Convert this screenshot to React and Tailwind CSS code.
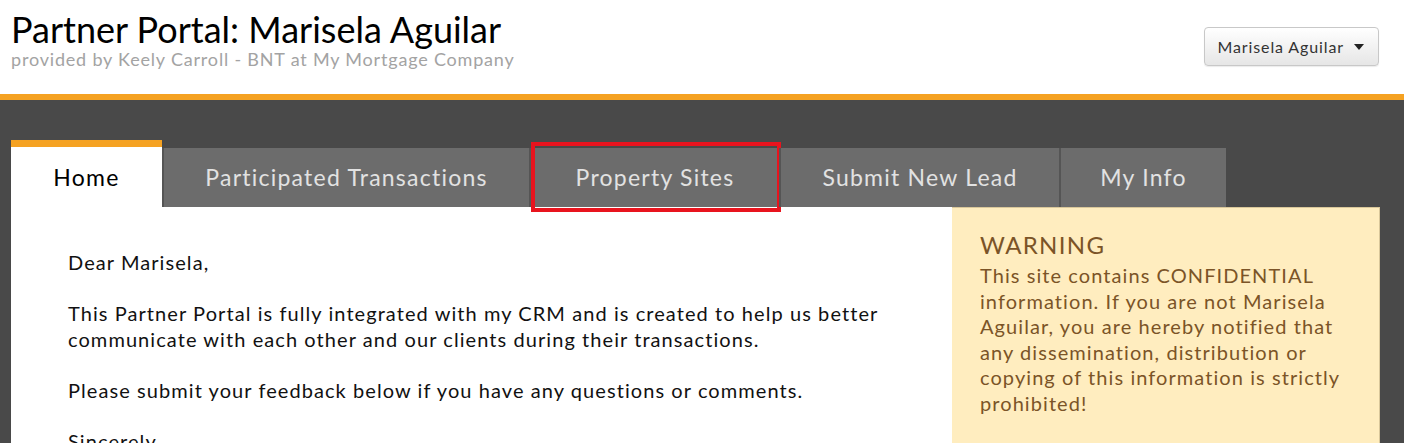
import React from 'react';

const tabs = [
    { id: 'participated', label: 'Participated Transactions', width: 'w-[367px]' },
    { id: 'property', label: 'Property Sites', width: 'w-[250px]', marked: true },
    { id: 'lead', label: 'Submit New Lead', width: 'w-[280px]' },
    { id: 'info', label: 'My Info', width: 'w-[167px]' },
];

const App = () => {
    return (
        <div className="w-[1404px] h-[443px] overflow-hidden bg-white font-['Lato',sans-serif] tracking-[0.055em]">
            {/* Header */}
            <header className="h-[94px] px-[11px] flex items-start justify-between">
                <div className="pt-[10px]">
                    <h1 className="text-[36px] leading-[38px] tracking-normal text-black">Partner Portal: Marisela Aguilar</h1>
                    <p className="mt-[1px] text-[18px] leading-[20px] tracking-[0.045em] text-[#a3a3a3]">provided by Keely Carroll - BNT at My Mortgage Company</p>
                </div>
                <button className="mt-[27px] mr-[14px] h-[39px] pl-[13px] pr-[14px] flex items-center gap-[10px] rounded-[4px] border border-[#c8c8c8] bg-gradient-to-b from-white to-[#e6e6e6] text-[16px] text-[#333] shadow-[0_1px_1px_rgba(0,0,0,0.08)]">
                    Marisela Aguilar
                    <svg width="10" height="6" viewBox="0 0 10 6"><path d="M0 0h10L5 6z" fill="#222" /></svg>
                </button>
            </header>

            {/* Orange rule */}
            <div className="h-[6px] bg-[#f5a222]" />

            {/* Main area */}
            <div className="bg-[#494949] pt-[40px] pl-[11px] pr-[24px] h-[343px] flex flex-col">
                {/* Tabs */}
                <nav className="flex items-end tracking-[0.077em]">
                    <div className="w-[151px] h-[67px] border-t-[7px] border-[#f5a222] bg-white flex items-center justify-center text-[23px] tracking-[0.055em] text-black">
                        Home
                    </div>
                    {tabs.map((tab) => (
                        <div
                            key={tab.id}
                            className={`relative ${tab.width} h-[59px] border-l-2 border-[#555] bg-[#6c6c6c] flex items-center justify-center text-[23px] text-[#e2e2e2]`}
                        >
                            {tab.label}
                            {tab.marked && (
                                <span className="absolute -top-[6px] -bottom-[5px] left-[0px] -right-[2px] border-4 border-[#e8141e]" />
                            )}
                        </div>
                    ))}
                </nav>

                {/* Content panel */}
                <div className="flex-1 bg-white flex tracking-[0.067em]">
                    <div className="flex-1 pl-[57px] pt-[43px] text-[20px] leading-[25.5px] text-[#111]">
                        <p>Dear Marisela,</p>
                        <p className="mt-[25.5px]">
                            This Partner Portal is fully integrated with my CRM and is created to help us better<br />
                            communicate with each other and our clients during their transactions.
                        </p>
                        <p className="mt-[25.5px]">Please submit your feedback below if you have any questions or comments.</p>
                        <p className="mt-[25.5px]">Sincerely,</p>
                    </div>

                    {/* Warning */}
                    <aside className="w-[428px] bg-[#ffedbf] border-r border-t border-[#d9c79a] pl-[28px] pr-[18px] pt-[22px] text-[#7b5427]">
                        <h2 className="text-[24px] leading-[30px] tracking-[0.055em]">WARNING</h2>
                        <p className="mt-[3px] text-[20px] leading-[25.6px]">
                            This site contains CONFIDENTIAL information. If you are not Marisela Aguilar, you are hereby notified that any dissemination, distribution or copying of this information is strictly prohibited!
                        </p>
                    </aside>
                </div>
            </div>
        </div>
    );
};

export default App;
